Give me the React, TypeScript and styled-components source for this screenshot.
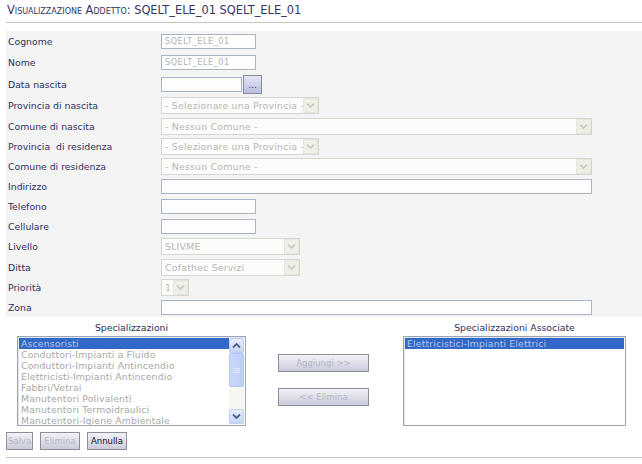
import React from "react";
import styled, { createGlobalStyle } from "styled-components";

const Global = createGlobalStyle`
  html, body { margin: 0; padding: 0; background: #ffffff; }
  body { font-family: "DejaVu Sans", Verdana, sans-serif; }
`;

const Page = styled.div`
  width: 642px;
  height: 464px;
  padding-left: 6px;
  box-sizing: border-box;
  overflow: hidden;
`;

const Title = styled.div`
  height: 23px;
  box-sizing: border-box;
  padding: 3px 0 0 1px;
  font-size: 11.4px;
  font-variant: small-caps;
  color: #333366;
  border-bottom: 1px solid #c4c4c4;
`;

const Panel = styled.div`
  margin-top: 8px;
  background: #f4f4f4;
  display: flex;
  flex-direction: column;
`;

const Row = styled.div<{ $h: number }>`
  height: ${(p) => p.$h}px;
  display: grid;
  grid-template-columns: 155px 1fr;
  align-items: center;
`;

const Label = styled.div`
  padding-left: 2px;
  font-size: 9.3px;
  color: #2e2e60;
  white-space: pre;
`;

const Field = styled.div`
  display: flex;
  align-items: center;
`;

const TextInput = styled.div<{ $w: number }>`
  width: ${(p) => p.$w}px;
  height: 15px;
  box-sizing: border-box;
  border: 1px solid #a7b4c6;
  background: #fdfdfe;
  font-size: 8px;
  color: #b4b4b4;
  padding: 2px 0 0 3px;
  letter-spacing: 0.6px;
`;

const DateButton = styled.div`
  width: 19px;
  height: 19px;
  box-sizing: border-box;
  margin-left: 1px;
  border: 1px solid #8a8a96;
  background: linear-gradient(#e4e6f6, #b9bee0);
  color: #303070;
  font-size: 9px;
  display: flex;
  align-items: center;
  justify-content: center;
  padding-top: 2px;
`;

const Select = styled.div<{ $w: number }>`
  width: ${(p) => p.$w}px;
  height: 17px;
  box-sizing: border-box;
  border: 1px solid #d6d6d0;
  background: #fcfcfa;
  display: flex;
  align-items: center;
  justify-content: space-between;
  font-size: 9.4px;
  letter-spacing: 0.2px;
  color: #b6b6b6;
  padding-left: 3px;
`;

const SelectText = styled.span`
  white-space: nowrap;
  overflow: hidden;
`;

const Arrow = styled.div`
  width: 15px;
  height: 15px;
  flex: none;
  box-sizing: border-box;
  border: 1px solid #e6e6de;
  background: #efefe8;
  display: flex;
  align-items: center;
  justify-content: center;
`;

const Lower = styled.div`
  display: flex;
  padding-left: 11px;
  margin-top: 5px;
`;

const ListCol = styled.div<{ $w: number }>`
  width: ${(p) => p.$w}px;
  display: flex;
  flex-direction: column;
`;

const ListHeading = styled.div`
  height: 14px;
  text-align: center;
  font-size: 9.3px;
  color: #2e2e60;
`;

const ListBox = styled.div`
  height: 90px;
  box-sizing: border-box;
  border: 1px solid #9aa6b8;
  box-shadow: inset 1px 1px 0 #dfe3ea;
  background: #ffffff;
  display: flex;
  padding: 1px;
`;

const Items = styled.div`
  flex: 1;
  display: flex;
  flex-direction: column;
`;

const Item = styled.div<{ $sel?: boolean }>`
  height: 11px;
  line-height: 11px;
  font-size: 9.3px;
  letter-spacing: 0.15px;
  padding-left: 2px;
  white-space: nowrap;
  color: ${(p) => (p.$sel ? "#b9c4e4" : "#a8a8a8")};
  background: ${(p) => (p.$sel ? "#3268c8" : "transparent")};
`;

const Scrollbar = styled.div`
  width: 15px;
  display: flex;
  flex-direction: column;
  background: #f6f6f2;
`;

const ScrollBtn = styled.div`
  width: 15px;
  height: 15px;
  box-sizing: border-box;
  border: 1px solid #c0cdf4;
  border-radius: 2px;
  background: linear-gradient(#e8eefe, #c6d4fa);
  display: flex;
  align-items: center;
  justify-content: center;
`;

const Thumb = styled.div`
  height: 34px;
  box-sizing: border-box;
  border: 1px solid #b6c6f2;
  border-radius: 2px;
  background: linear-gradient(90deg, #c9d7fc, #bccdfa);
  display: flex;
  align-items: center;
  justify-content: center;
`;

const Track = styled.div`
  flex: 1;
`;

const MidCol = styled.div`
  width: 91px;
  margin: 0 34px 0 32px;
  display: flex;
  flex-direction: column;
  padding-top: 32px;
  gap: 16px;
`;

const Btn = styled.div<{ $w?: number; $enabled?: boolean }>`
  ${(p) => (p.$w ? `width: ${p.$w}px;` : "")}
  height: 18px;
  box-sizing: border-box;
  border: 1px solid #8e8e9c;
  background: linear-gradient(#f2f2f6, #c9cbdb);
  display: flex;
  align-items: center;
  justify-content: center;
  font-size: 8.5px;
  color: ${(p) => (p.$enabled ? "#111122" : "#b4b6c8")};
  white-space: nowrap;
`;

const Footer = styled.div`
  display: flex;
  gap: 7px;
  margin-top: 6px;
  height: 26px;
  border-bottom: 1px solid #c4c4c4;
  box-sizing: border-box;
`;

const Chevron = ({ color = "#c8c8c0" }: { color?: string }) => (
  <svg width="9" height="7" viewBox="0 0 9 7">
    <path d="M1 1.5 L4.5 5 L8 1.5" fill="none" stroke={color} strokeWidth="1.6" />
  </svg>
);

const ScrollArrow = ({ up }: { up?: boolean }) => (
  <svg width="9" height="7" viewBox="0 0 9 7">
    <path
      d={up ? "M1 5.5 L4.5 2 L8 5.5" : "M1 1.5 L4.5 5 L8 1.5"}
      fill="none"
      stroke="#4d6185"
      strokeWidth="1.8"
    />
  </svg>
);

const Grip = () => (
  <svg width="7" height="7" viewBox="0 0 7 7">
    <path d="M0 1.5h7M0 3.5h7M0 5.5h7" stroke="#e6ecfe" strokeWidth="1" />
  </svg>
);

const SelectBox = ({ w, text }: { w: number; text: string }) => (
  <Select $w={w}>
    <SelectText>{text}</SelectText>
    <Arrow>
      <Chevron />
    </Arrow>
  </Select>
);

const specs = [
  "Ascensoristi",
  "Conduttori-Impianti a Fluido",
  "Conduttori-Impianti Antincendio",
  "Elettricisti-Impianti Antincendio",
  "Fabbri/Vetrai",
  "Manutentori Polivalenti",
  "Manutentori Termoidraulici",
  "Manutentori-Igiene Ambientale",
];

export default function App() {
  return (
    <Page>
      <Global />
      <Title>Visualizzazione Addetto: SQELT_ELE_01 SQELT_ELE_01</Title>
      <Panel>
        <Row $h={21}>
          <Label>Cognome</Label>
          <Field><TextInput $w={95}>SQELT_ELE_01</TextInput></Field>
        </Row>
        <Row $h={21}>
          <Label>Nome</Label>
          <Field><TextInput $w={95}>SQELT_ELE_01</TextInput></Field>
        </Row>
        <Row $h={22}>
          <Label>Data nascita</Label>
          <Field>
            <TextInput $w={81} />
            <DateButton>...</DateButton>
          </Field>
        </Row>
        <Row $h={21}>
          <Label>Provincia di nascita</Label>
          <Field><SelectBox w={158} text="- Selezionare una Provincia -" /></Field>
        </Row>
        <Row $h={20}>
          <Label>Comune di nascita</Label>
          <Field><SelectBox w={431} text="- Nessun Comune -" /></Field>
        </Row>
        <Row $h={20}>
          <Label>{"Provincia  di residenza"}</Label>
          <Field><SelectBox w={158} text="- Selezionare una Provincia -" /></Field>
        </Row>
        <Row $h={20}>
          <Label>Comune di residenza</Label>
          <Field><SelectBox w={431} text="- Nessun Comune -" /></Field>
        </Row>
        <Row $h={20}>
          <Label>Indirizzo</Label>
          <Field><TextInput $w={431} /></Field>
        </Row>
        <Row $h={20}>
          <Label>Telefono</Label>
          <Field><TextInput $w={95} /></Field>
        </Row>
        <Row $h={20}>
          <Label>Cellulare</Label>
          <Field><TextInput $w={95} /></Field>
        </Row>
        <Row $h={21}>
          <Label>Livello</Label>
          <Field><SelectBox w={139} text="SLIVME" /></Field>
        </Row>
        <Row $h={20}>
          <Label>Ditta</Label>
          <Field><SelectBox w={139} text="Cofathec Servizi" /></Field>
        </Row>
        <Row $h={20}>
          <Label>Priorità</Label>
          <Field><SelectBox w={28} text="1" /></Field>
        </Row>
        <Row $h={20}>
          <Label>Zona</Label>
          <Field><TextInput $w={431} /></Field>
        </Row>
      </Panel>
      <Lower>
        <ListCol $w={229}>
          <ListHeading>Specializzazioni</ListHeading>
          <ListBox>
            <Items>
              {specs.map((s, i) => (
                <Item key={s} $sel={i === 0}>{s}</Item>
              ))}
            </Items>
            <Scrollbar>
              <ScrollBtn><ScrollArrow up /></ScrollBtn>
              <Thumb><Grip /></Thumb>
              <Track />
              <ScrollBtn><ScrollArrow /></ScrollBtn>
            </Scrollbar>
          </ListBox>
        </ListCol>
        <MidCol>
          <Btn>Aggiungi &gt;&gt;</Btn>
          <Btn>&lt;&lt; Elimina</Btn>
        </MidCol>
        <ListCol $w={223}>
          <ListHeading>Specializzazioni Associate</ListHeading>
          <ListBox>
            <Items>
              <Item $sel>Elettricistici-Impianti Elettrici</Item>
            </Items>
          </ListBox>
        </ListCol>
      </Lower>
      <Footer>
        <Btn $w={27}>Salva</Btn>
        <Btn $w={40}>Elimina</Btn>
        <Btn $w={40} $enabled>Annulla</Btn>
      </Footer>
    </Page>
  );
}
